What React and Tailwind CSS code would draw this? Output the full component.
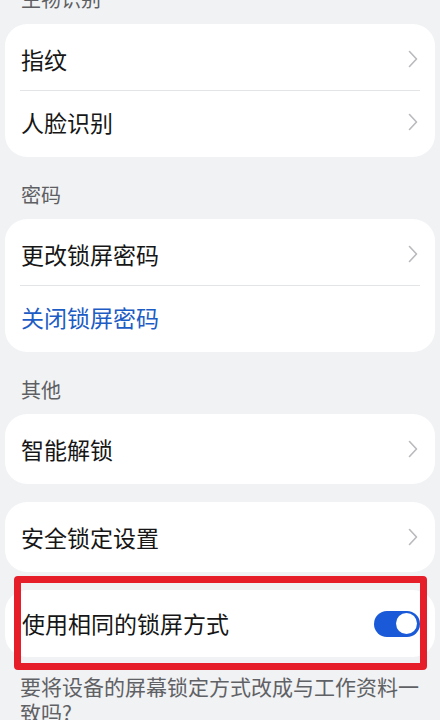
import React from 'react';

const font = { fontFamily: '"Noto Sans CJK SC", "Noto Sans", sans-serif' };

const Chevron = () => (
  <svg width="10" height="18" viewBox="0 0 10 18" fill="none" className="shrink-0">
    <path d="M1.5 1.5 L8.5 9 L1.5 16.5" stroke="#b9babd" strokeWidth="1.6" strokeLinecap="round" strokeLinejoin="round" />
  </svg>
);

const Row = ({ label, blue, chevron = true, children }) => (
  <div className="h-[62px] flex items-center justify-between pl-[16px] pr-[17px]">
    <span className={`text-[23px] leading-none ${blue ? 'text-[#1d5cc4]' : 'text-[#161616]'}`}>{label}</span>
    {chevron && <Chevron />}
    {children}
  </div>
);

const Divider = () => <div className="h-px bg-[#e3e4e6] mx-[15px]" />;

const Card = ({ children }) => (
  <div className="bg-white rounded-[22px] py-[4px]">{children}</div>
);

const Header = ({ children }) => (
  <div className="pt-[26px] pb-[12px] pl-[16px] text-[20px] leading-[24px] text-[#5e5f62]">{children}</div>
);

export default function App() {
  return (
    <div className="w-[440px] h-[720px] overflow-hidden bg-[#f1f2f4] px-[5px]" style={font}>
      <div className="-mt-[13px] pb-[13px] pl-[16px] text-[20px] leading-[24px] text-[#5e5f62]">生物识别</div>
      <Card>
        <Row label="指纹" />
        <Divider />
        <Row label="人脸识别" />
      </Card>

      <Header>密码</Header>
      <Card>
        <Row label="更改锁屏密码" />
        <Divider />
        <Row label="关闭锁屏密码" blue chevron={false} />
      </Card>

      <Header>其他</Header>
      <div className="flex flex-col gap-[18px]">
        <Card>
          <Row label="智能解锁" />
        </Card>
        <Card>
          <Row label="安全锁定设置" />
        </Card>
        <div className="relative">
          <div className="bg-white rounded-[22px] h-[67px] flex items-center justify-between pl-[17px] pr-[15px]">
            <span className="text-[23px] leading-none text-[#161616]">使用相同的锁屏方式</span>
            <div className="w-[46px] h-[26px] rounded-full bg-[#1a5ad8] flex items-center justify-end pr-[3px]">
              <div className="w-[21px] h-[21px] rounded-full bg-white" />
            </div>
          </div>
          <div className="absolute left-[9px] right-[8px] -top-[14px] -bottom-[13px] border-[7px] border-[#e61e2a] rounded-[4px]" />
        </div>
      </div>

      <p className="pt-[16px] px-[15px] text-[21px] leading-[26px] text-[#606164]">
        要将设备的屏幕锁定方式改成与工作资料一致吗?
      </p>
    </div>
  );
}
